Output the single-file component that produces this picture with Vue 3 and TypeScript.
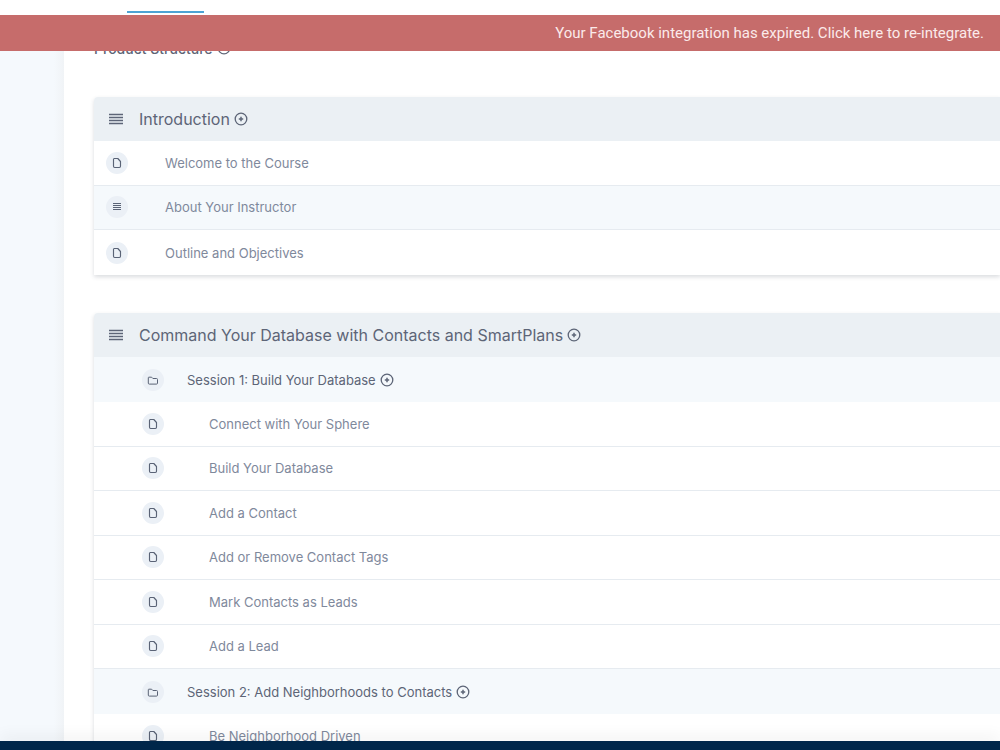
<script setup lang="ts">
type Icon = 'page' | 'text'

interface Lesson {
  title: string
  icon: Icon
}

interface Session {
  title: string
  lessons: Lesson[]
}

const page = (title: string): Lesson => ({ title, icon: 'page' })

const introduction: Lesson[] = [
  page('Welcome to the Course'),
  { title: 'About Your Instructor', icon: 'text' },
  page('Outline and Objectives'),
]

const sessions: Session[] = [
  {
    title: 'Session 1: Build Your Database',
    lessons: [
      page('Connect with Your Sphere'),
      page('Build Your Database'),
      page('Add a Contact'),
      page('Add or Remove Contact Tags'),
      page('Mark Contacts as Leads'),
      page('Add a Lead'),
    ],
  },
  {
    title: 'Session 2: Add Neighborhoods to Contacts',
    lessons: [page('Be Neighborhood Driven')],
  },
]
</script>

<template>
  <div class="app">
    <svg class="symbols" aria-hidden="true">
      <symbol id="i-add" viewBox="0 0 14 14">
        <circle cx="7" cy="7" r="5.8" fill="none" stroke="currentColor" stroke-width="1.3" />
        <path d="M7 4.8v4.4M4.8 7h4.4" fill="none" stroke="currentColor" stroke-width="1.5" />
      </symbol>
      <symbol id="i-drag" viewBox="0 0 14 12">
        <path d="M0 1.5h14M0 4.5h14M0 7.5h14M0 10.5h14" stroke="currentColor" stroke-width="1.5" />
      </symbol>
      <symbol id="i-page" viewBox="0 0 22 22">
        <path d="M8.2 6.5h3.6l2.7 3v4.8q0 1.2-1.2 1.2H8.7q-1.2 0-1.2-1.2V7.5q0-1 .7-1z" fill="none" stroke="currentColor" stroke-width="1.15" stroke-linejoin="round" />
      </symbol>
      <symbol id="i-text" viewBox="0 0 22 22">
        <path d="M7 7.5h8M7 9.5h8M7 11.5h8M7 13.5h8" stroke="currentColor" stroke-width="1" />
      </symbol>
      <symbol id="i-folder" viewBox="0 0 22 22">
        <path d="M6.8 8.2h2.8l1.3 1.3h3.6q1 0 1 1v3.6q0 1-1 1H7.3q-1 0-1-1V8.8q0-.6.5-.6z" fill="none" stroke="currentColor" stroke-width="1" stroke-linejoin="round" />
      </symbol>
    </svg>

    <nav class="tabs"><span class="active-tab"></span></nav>
    <a class="banner" href="#">Your Facebook integration has expired. Click here to re-integrate.</a>

    <div class="body">
      <aside class="gutter"></aside>
      <main class="content">
        <h1 class="page-title">
          Product Structure
          <button class="add" type="button" aria-label="Add section"><svg><use href="#i-add" /></svg></button>
        </h1>

        <section class="card">
          <h2 class="head">
            <svg class="drag"><use href="#i-drag" /></svg>
            Introduction
            <button class="add" type="button" aria-label="Add to Introduction"><svg><use href="#i-add" /></svg></button>
          </h2>
          <ul class="lessons intro">
            <li v-for="l in introduction" :key="l.title" :class="['row', l.icon]">
              <svg class="badge"><use :href="`#i-${l.icon}`" /></svg>
              <a href="#">{{ l.title }}</a>
            </li>
          </ul>
        </section>

        <section class="card">
          <h2 class="head">
            <svg class="drag"><use href="#i-drag" /></svg>
            Command Your Database with Contacts and SmartPlans
            <button class="add" type="button" aria-label="Add to module"><svg><use href="#i-add" /></svg></button>
          </h2>
          <template v-for="s in sessions" :key="s.title">
            <h3 class="session">
              <svg class="badge"><use href="#i-folder" /></svg>
              {{ s.title }}
              <button class="add" type="button" :aria-label="`Add to ${s.title}`"><svg><use href="#i-add" /></svg></button>
            </h3>
            <ul class="lessons nested">
              <li v-for="l in s.lessons" :key="l.title" class="row">
                <svg class="badge"><use href="#i-page" /></svg>
                <a href="#">{{ l.title }}</a>
              </li>
            </ul>
          </template>
        </section>
      </main>
    </div>
    <footer class="footer"></footer>
  </div>
</template>

<style>
body {
  margin: 0;
}
</style>

<style scoped>
.app {
  display: flex;
  flex-direction: column;
  height: 100vh;
  overflow: hidden;
  background: #fff;
  color: #5d6577;
  font-family: Inter, "Liberation Sans", sans-serif;
}
.symbols {
  position: absolute;
  width: 0;
  height: 0;
}
.tabs {
  display: flex;
  flex: none;
  align-items: flex-end;
  box-sizing: border-box;
  height: 15px;
  padding: 0 0 2px 127px;
}
.active-tab {
  width: 77px;
  height: 2px;
  background: #4da3d4;
}
.banner {
  flex: none;
  padding: 0 16px;
  background: #c66c6b;
  color: #fbeaea;
  font: 15px/36px Roboto, "Liberation Sans", sans-serif;
  text-align: right;
  text-decoration: none;
}
.body {
  display: flex;
  flex: 1;
  min-height: 0;
  overflow: hidden;
}
.gutter {
  flex: none;
  width: 64px;
  background: linear-gradient(to right, #f5f9fd 54px, #f0f3f6 64px);
}
.content {
  flex: 1;
  min-width: 0;
  margin-top: -13px;
  padding-left: 30px;
}
h1,
h2,
h3,
ul {
  margin: 0;
  padding: 0;
  font-weight: 400;
  list-style: none;
}
.page-title,
.head,
.session {
  display: flex;
  align-items: center;
  gap: 4px;
}
.page-title {
  height: 20px;
  margin-bottom: 39px;
  font-size: 14px;
  font-weight: 500;
}
.add {
  display: flex;
  padding: 0;
  border: 0;
  background: none;
  color: inherit;
}
.add svg {
  width: 14px;
  height: 14px;
}
.card {
  margin-bottom: 38px;
  border-radius: 4px 0 0 0;
  box-shadow: 0 2px 4px rgba(50, 60, 80, 0.18);
}
.head {
  height: 44px;
  padding-left: 15px;
  border-radius: 4px 0 0 0;
  background: #ebf0f4;
  font-size: 16px;
}
.drag {
  width: 14px;
  height: 12px;
  margin-right: 12px;
}
.lessons {
  display: grid;
  grid-auto-rows: 1fr;
}
.intro {
  min-height: 134px;
}
.row {
  display: flex;
  align-items: center;
  box-sizing: border-box;
  min-height: 44px;
  padding-left: 12px;
  border-bottom: 1px solid #e6ebf0;
  background: #fff;
  font-size: 13px;
}
.intro .row:last-child {
  border-bottom: 0;
}
.row.text {
  background: #f5f9fc;
}
.row a {
  color: #7f899c;
  text-decoration: none;
}
.badge {
  flex: none;
  width: 22px;
  height: 22px;
  border-radius: 50%;
  background: #ebf0f6;
  color: #5a6376;
}
.intro .badge {
  margin-right: 37px;
}
.session {
  height: 45px;
  padding-left: 48px;
  background: #f5f9fc;
  font-size: 13px;
}
.session .badge {
  margin-right: 19px;
}
.nested:not(:last-child) {
  min-height: 267px;
}
.nested .row {
  padding-left: 48px;
}
.nested .badge {
  margin-right: 45px;
}
.footer {
  z-index: 1;
  flex: none;
  height: 9px;
  background: #00264a;
  box-shadow: 0 -4px 16px rgba(0, 0, 0, 0.07);
}
</style>
